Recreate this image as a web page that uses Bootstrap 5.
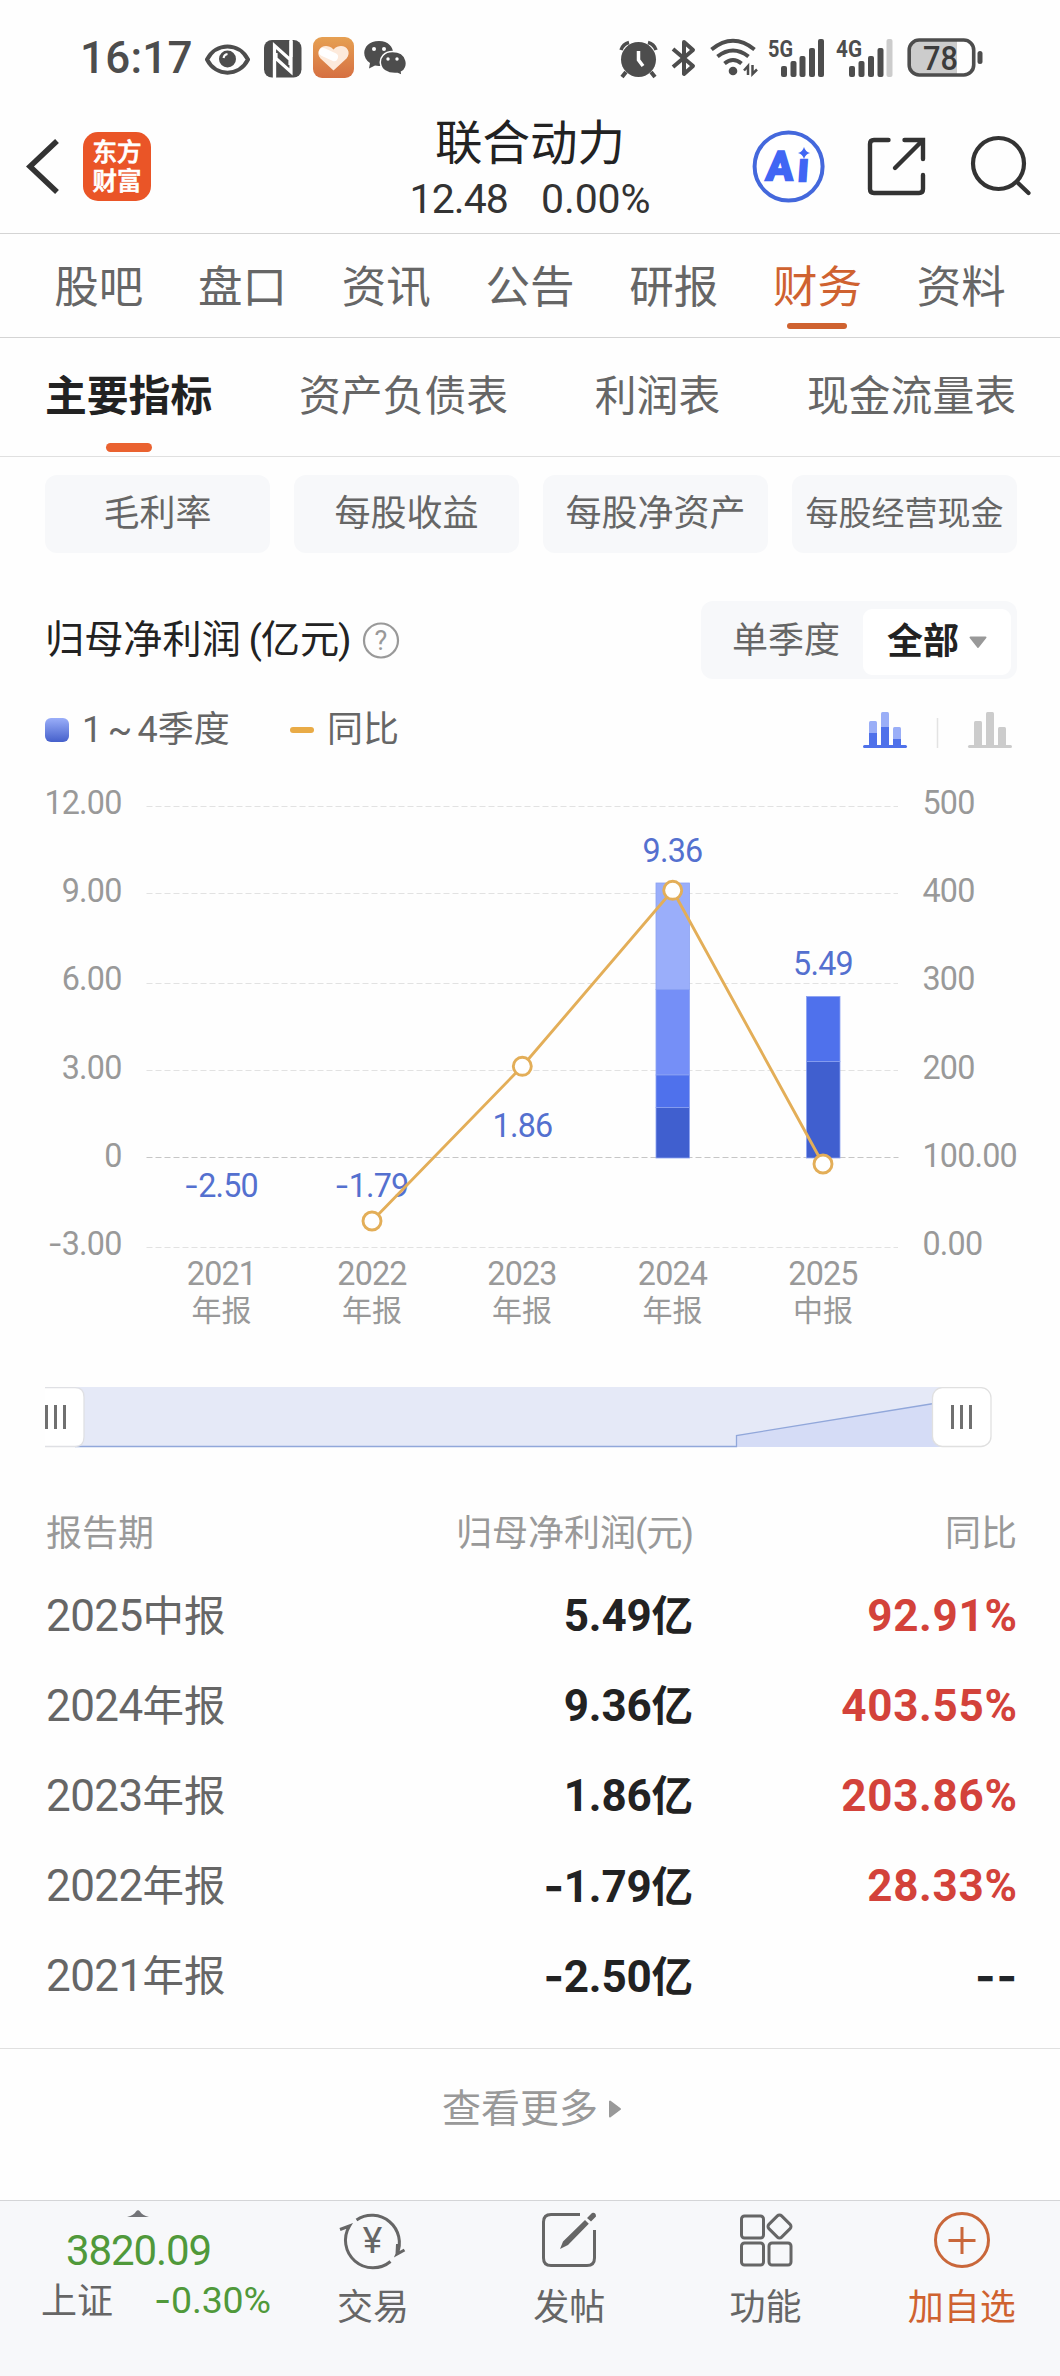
<!DOCTYPE html>
<html lang="zh-CN">
<head>
<meta charset="utf-8">
<meta name="viewport" content="width=device-width, initial-scale=1">
<title>联合动力 - 财务</title>
<link href="https://cdn.jsdelivr.net/npm/bootstrap@5.3.0/dist/css/bootstrap.min.css" rel="stylesheet">
<style>
  :root { --ink:#222; --mid:#666; --soft:#999; --brand:#cf6230; --rule:#d4d4d4; --panel:#f7f8fa; --up:#d3423a; --down:#50993a; --blue:#5470cf; }
  body { font-family: Roboto, "Noto Sans CJK SC", sans-serif; color: var(--ink); background:#fefefe; width:1060px; height:2376px; overflow:hidden; }
  svg { display:block; flex:none; }
  svg text { font-family: Roboto, "Noto Sans CJK SC", sans-serif; }
  .sgn { font-family: Inter, sans-serif; }
  .statusbar { height:115px; padding:36px 77px 35px 80px; color:#4d4d4d; }
  .clock { font-size:44px; font-weight:500; line-height:44px; width:125px; letter-spacing:.2px; }
  .eye { margin-left:0; } .nfc { margin-left:14px; } .heart { margin-left:11px; } .chat { margin-left:10px; }
  .bt, .wifi { margin-left:13px; } .sig1 { margin-left:9px; } .sig2 { margin-left:11px; } .batt { margin-left:14px; }
  .titlebar { height:118px; padding:0 28px 0 26px; }
  .stock-name { font-size:47.5px; line-height:58px; }
  .stock-quote { font-size:41px; line-height:48px; letter-spacing:-.9px; color:#333; gap:33px; padding-top:2px; }
  .stock-quote .rate { letter-spacing:-.1px; }
  .applogo { margin-left:23px; } .share { margin-left:41px; } .find { margin-left:43px; }
  .tabs-main { height:105px; padding:0 27px; border-top:1px solid var(--rule); border-bottom:1px solid var(--rule); }
  .tabs-main a { color:var(--mid); font-size:44.5px; line-height:60px; padding:24px 0 0; text-decoration:none; text-align:center; position:relative; }
  .tabs-main a.active { color:var(--brand); }
  .tabs-main a.active::after { content:""; position:absolute; left:50%; margin-left:-30px; bottom:8px; width:60px; height:6px; border-radius:3px; background:var(--brand); }
  .tabs-sub { height:119px; padding:0 44px 0 45px; border-bottom:1px solid #e0e0e0; }
  .tabs-sub a { color:var(--mid); font-size:41.8px; line-height:60px; padding-top:29px; text-decoration:none; position:relative; }
  .tabs-sub a.active { color:var(--ink); font-weight:700; }
  .tabs-sub a.active::after { content:""; position:absolute; left:50%; margin-left:-23px; bottom:4px; width:46px; height:9px; border-radius:4.5px; background:#ea6230; }
  .chips { padding:18px 43px 0 45px; gap:24px; }
  .chip { flex:1 1 0; height:78px; border-radius:12px; background:var(--panel); color:var(--mid); font-size:36px; line-height:78px; text-align:center; white-space:nowrap; }
  .chip.tight { font-size:33px; line-height:77px; }
  .section-head { height:78px; margin-top:48px; padding:0 43px 0 45px; }
  .section-title { font-size:39.2px; line-height:78px; word-spacing:-1px; white-space:nowrap; }
  .section-title i { font-style:normal; margin:0 -1.2px; }
  .help { margin-left:12px; }
  .segment { width:316px; height:78px; border-radius:12px; background:var(--panel); padding:8px 6px 4px 0; font-size:36px; }
  .segment .pick { width:148px; height:66px; border-radius:9px; background:#fff; font-weight:700; line-height:64px; padding-left:1px; }
  .segment .pick svg { margin-left:9px; }
  .segment .idle { width:162px; color:var(--mid); line-height:64px; padding-left:31px; }
  .legend { height:72px; padding:0 48px 0 45px; color:var(--mid); font-size:36px; margin-top:15px; margin-bottom:1px; line-height:72px; }
  .key-box { width:24px; height:24px; border-radius:6px; background:linear-gradient(#9aaef9,#4560cb); margin-right:13px; }
  .key-text { width:208px; word-spacing:-3.5px; white-space:nowrap; }
  .key-dash { width:24px; height:6px; border-radius:3px; background:#e9ab46; margin-right:13px; }
  .data-table { padding:0 43px 0 45px; margin-top:50px; }
  .data-table .line { height:90px; line-height:90px; font-size:41.5px; color:var(--mid); }
  .data-table .line.head { height:72px; line-height:72px; font-size:36px; color:var(--soft); margin-bottom:1px; }
  .head i { font-style:normal; margin:0 -1px; }
  .c1 { width:324px; padding-left:1px; } .c2 { width:324px; text-align:right; } .c3 { flex:1; text-align:right; }
  .num { font-size:44px; letter-spacing:-.6px; }
  .line .c2 .num { font-weight:700; letter-spacing:-.2px; }
  .line .c3 .num { font-weight:700; letter-spacing:.7px; margin-right:-.7px; }
  .line:not(.head) .c2 { color:var(--ink); font-weight:700; }
  .line:not(.head) .c3 { color:var(--up); }
  .more { height:152px; margin-top:27px; border-top:1px solid #e0e0e0; color:var(--soft); font-size:39px; line-height:60px; padding:30px 0 0 4px; }
  .more svg { margin:20px 0 0 10px; }
  .bottombar { height:176px; border-top:1px solid #d4d5d7; background:var(--panel); color:var(--mid); font-size:36px; }
  .index { width:275px; color:var(--down); padding-top:9px; }
  .index .val { font-size:42px; line-height:44px; letter-spacing:-1.1px; margin-top:12px; padding-left:2px; }
  .index .sub { gap:41px; margin-top:4px; padding-left:41px; width:275px; }
  .index .name { color:var(--mid); line-height:51px; }
  .index .chg { font-size:37.5px; line-height:46px; letter-spacing:-.2px; }
  .action { width:196.3px; padding-top:8px; line-height:48px; }
  .action span { margin-top:13px; }
  .action.add { color:var(--brand); }
</style>
</head>
<body>
<!-- system status bar -->
<div class="statusbar d-flex align-items-start">
  <div class="clock">16:17</div>
  <svg class="eye" width="45" height="44" viewBox="205 36 45 44"><path d="M207 59.5C216 42 239 42 248 59.5C239 77 216 77 207 59.5Z" fill="none" stroke="#4d4d4d" stroke-width="4"/><circle cx="227.500" cy="59" r="8.500" fill="#4d4d4d"/><path d="M223.500 58q.5-3.500 4-4" stroke="#fff" stroke-width="2" fill="none"/></svg>
  <svg class="nfc" width="38" height="44" viewBox="264 36 38 44"><rect x="264" y="40" width="37.500" height="37.500" rx="8" fill="#4d4d4d"/><path d="M274.500 77V45.500L290 59.500V65M291 41v31L276 58.500V53" fill="none" stroke="#fff" stroke-width="3.200"/><path d="M274.500 60v18M291 40v17" stroke="#fff" stroke-width="3.200"/></svg>
  <svg class="heart" width="41" height="44" viewBox="313 36 41 44"><defs><linearGradient id="hb" x2="0" y2="1"><stop stop-color="#e6a052"/><stop offset="1" stop-color="#d67042"/></linearGradient></defs><rect x="313" y="37" width="41" height="41" rx="9" fill="url(#hb)"/><path d="M333.500 70.500L320.500 58.500C313.500 50 325 41 333.500 49.500C342 41 353.500 50 346.500 58.500Z" fill="#fdeadb"/><path d="M323 52l11 5" stroke="#fff" stroke-width="8" stroke-linecap="round"/></svg>
  <svg class="chat" width="42" height="44" viewBox="364 36 42 44" fill="#4d4d4d"><path d="M379 41c19 0 19 25 0 25l-4-.5-6 3 1-5.500C360 57 363 41 379 41Z"/><path d="M392.500 51.500c16 0 17 17 9 20.500l.5 3.500-4.500-2c-22 2-22-22-5-22Z" stroke="#fefefe" stroke-width="1.500"/><g fill="#fefefe"><circle cx="374" cy="49" r="2"/><circle cx="384" cy="49" r="2"/><circle cx="388" cy="59" r="1.700"/><circle cx="397" cy="59" r="1.700"/></g></svg>
  <svg class="ms-auto" width="39" height="44" viewBox="619 36 39 44"><circle cx="638.500" cy="59.500" r="17.500" fill="#4d4d4d"/><path d="M626 72l-4 5M651 72l4 5" stroke="#4d4d4d" stroke-width="4"/><path d="M621 50q2-6 8-7.500M656 50q-2-6-8-7.500" stroke="#4d4d4d" stroke-width="3.500" fill="none"/><path d="M638.500 51v9l4.500 6" fill="none" stroke="#fff" stroke-width="3.500"/></svg>
  <svg class="bt" width="26" height="44" viewBox="671 36 26 44"><path d="M673 49l20 17-9 8V42l9 8-20 17" fill="none" stroke="#4d4d4d" stroke-width="4" stroke-linejoin="round"/></svg>
  <svg class="wifi" width="49" height="44" viewBox="710 36 49 44" fill="none" stroke="#4d4d4d" stroke-width="4"><path d="M711.500 49.500q21.500-17.500 43 0M717.500 56.500q15.500-12 31 0M724.500 63.500q8.500-7 17 0"/><circle cx="733" cy="71" r="4.300" fill="#4d4d4d" stroke="none"/><path d="M748 75V66l-4 4.500M752.500 65v9l4.500-4.500" stroke-width="2.500"/></svg>
  <svg class="sig1" width="57" height="44" viewBox="768 36 57 44" fill="#4d4d4d"><text x="768" y="57" font-size="24" font-weight="700" textLength="25" lengthAdjust="spacingAndGlyphs">5G</text><rect x="781" y="66" width="6" height="11" rx="2"/><rect x="790.500" y="61" width="6" height="16" rx="2"/><rect x="799.500" y="56" width="6" height="21" rx="2"/><rect x="809" y="48" width="6" height="29" rx="2"/><rect x="818" y="39" width="6" height="38" rx="2"/></svg>
  <svg class="sig2" width="57" height="44" viewBox="836 36 57 44" fill="#4d4d4d"><text x="836" y="57" font-size="24" font-weight="700" textLength="26" lengthAdjust="spacingAndGlyphs">4G</text><rect x="849" y="66" width="6" height="11" rx="2"/><rect x="858.500" y="61" width="6" height="16" rx="2"/><rect x="868" y="56" width="6" height="21" rx="2"/><rect x="877.500" y="48" width="6" height="29" rx="2"/><rect x="886.500" y="39" width="6" height="38" rx="2" fill="#ccc"/></svg>
  <svg class="batt" width="76" height="44" viewBox="907 36 76 44"><path d="M957 41V74H921Q911 74 911 64V51Q911 41 921 41Z" fill="#ccc"/><rect x="909.200" y="40" width="64.500" height="35" rx="10" fill="none" stroke="#4d4d4d" stroke-width="3.600"/><rect x="977.500" y="51" width="5" height="13" rx="2.500" fill="#4d4d4d"/><text x="940.500" y="69.500" font-size="33" font-weight="500" text-anchor="middle" textLength="35" lengthAdjust="spacingAndGlyphs" fill="#3c3c3c">78</text></svg>
</div>

<!-- stock title bar -->
<header class="titlebar d-flex align-items-start position-relative">
  <svg width="34" height="90" viewBox="26 115 34 90"><path d="M57 141L30 166.500L57 192" fill="none" stroke="#333" stroke-width="5.500"/></svg>
  <svg class="applogo" width="69" height="90" viewBox="83 115 69 90"><rect x="83" y="132" width="68" height="69" rx="15" fill="#ea5527"/><g fill="#fff" font-size="24.500" font-weight="500" stroke="#fff" stroke-width=".7" text-anchor="middle"><text x="117" y="161">东方</text><text x="117" y="190">财富</text></g></svg>
  <div class="position-absolute start-50 translate-middle-x text-center">
    <div class="stock-name">联合动力</div>
    <div class="stock-quote d-flex justify-content-center"><span>12.48</span><span class="rate">0.00%</span></div>
  </div>
  <svg class="ms-auto" width="74" height="90" viewBox="752 115 74 90"><circle cx="788.600" cy="166.500" r="34" fill="#fff" stroke="#4468dc" stroke-width="4"/><g fill="#4066f4" stroke="#4066f4" stroke-width="2.400" font-size="40" font-weight="700" transform="translate(0 180) skewX(-4)"><text x="765.500" y="0">A</text><text x="797" y="1">ı</text></g><path d="M804 147q1.500 5 6 6-4.500 1-6 6-1.500-5-6-6 4.500-1 6-6Z" fill="#4066f4"/></svg>
  <svg class="share" width="60" height="90" viewBox="867 115 60 90" fill="none" stroke="#333" stroke-width="4.400" stroke-linecap="round"><path d="M888.500 140H874Q870 140 870 144V189Q870 193 874 193H919Q923 193 923 189V175M904.500 140H923V159M922 141L895 168"/></svg>
  <svg class="find" width="62" height="90" viewBox="970 115 62 90" fill="none" stroke="#333" stroke-width="4.200" stroke-linecap="round"><circle cx="998.500" cy="163.500" r="25.500"/><path d="M1017 182l11.500 11"/></svg>
</header>

<nav class="tabs-main d-flex">
  <a class="flex-fill" href="#">股吧</a><a class="flex-fill" href="#">盘口</a><a class="flex-fill" href="#">资讯</a><a class="flex-fill" href="#">公告</a><a class="flex-fill" href="#">研报</a><a class="flex-fill active" href="#">财务</a><a class="flex-fill" href="#">资料</a>
</nav>
<nav class="tabs-sub d-flex justify-content-between">
  <a class="active" href="#">主要指标</a><a href="#">资产负债表</a><a href="#">利润表</a><a href="#">现金流量表</a>
</nav>

<div class="chips d-flex">
  <div class="chip">毛利率</div><div class="chip">每股收益</div><div class="chip">每股净资产</div><div class="chip tight">每股经营现金</div>
</div>

<div class="section-head d-flex align-items-center">
  <div class="section-title">归母净利润 <i>(</i>亿元<i>)</i></div>
  <svg class="help" width="38" height="38" viewBox="0 0 38 38"><circle cx="19" cy="19.500" r="17" fill="none" stroke="#999" stroke-width="2.200"/><text x="19" y="29" font-size="27" text-anchor="middle" fill="#999">?</text></svg>
  <div class="segment d-flex ms-auto">
    <div class="idle">单季度</div>
    <div class="pick d-flex justify-content-center align-items-center">全部<svg width="20" height="14" viewBox="0 0 20 14"><path d="M2.500 2.500H17.500L10 12Z" fill="#999" stroke="#999" stroke-width="2" stroke-linejoin="round"/></svg></div>
  </div>
</div>

<div class="legend d-flex align-items-center">
  <span class="key-box"></span><span class="key-text">1 ~ 4季度</span><span class="key-dash"></span><span>同比</span>
  <svg class="ms-auto" width="149" height="38" viewBox="863 711 149 38">
    <g fill="#9aaef7"><rect x="869" y="721" width="8" height="24" rx="1.500"/><rect x="881" y="712" width="8" height="30" rx="1.500"/><rect x="893" y="727" width="8" height="18" rx="1.500"/></g>
    <g fill="#4f71ea"><path d="M869 733h8v14h-8zM881 727h8v20h-8zM893 739h8v8h-8z"/><rect x="863" y="745" width="44" height="3" rx="1.500"/></g>
    <path d="M937.500 718v30" stroke="#e3e3e3" stroke-width="1.500"/>
    <g fill="#ccc"><rect x="974" y="721" width="8" height="25" rx="1.500"/><rect x="986" y="712" width="8" height="34" rx="1.500"/><rect x="998" y="727" width="8" height="19" rx="1.500"/><rect x="968" y="745" width="44" height="3" rx="1.500"/></g>
  </svg>
</div>

<!-- profit chart and range slider -->
<svg width="1060" height="681" viewBox="0 767 1060 681">
  <g stroke="#e2e2e2" stroke-width="1.200" stroke-dasharray="6 3"><path d="M146.500 806.500H898M146.500 893.500H898M146.500 983.500H898M146.500 1070.500H898M146.500 1247.500H898"/><path d="M146.500 1157.500H898.500" stroke="#c6c6c6"/></g>
  <g fill="#999" font-size="32.300" letter-spacing="-.8">
    <g text-anchor="end"><text x="121.500" y="814">12.00</text><text x="121.500" y="902">9.00</text><text x="121.500" y="990">6.00</text><text x="121.500" y="1078.500">3.00</text><text x="121.500" y="1166.500">0</text><text x="121.500" y="1255"><tspan class="sgn">-</tspan>3.00</text></g>
    <text x="922.500" y="814">500</text><text x="922.500" y="902">400</text><text x="922.500" y="990">300</text><text x="922.500" y="1078.500">200</text><text x="922.500" y="1166.500">100.00</text><text x="922.500" y="1255">0.00</text>
    <g text-anchor="middle"><text x="221.500" y="1285">2021</text><text x="372" y="1285">2022</text><text x="522" y="1285">2023</text><text x="672.500" y="1285">2024</text><text x="823" y="1285">2025</text></g>
  </g>
  <g fill="#999" font-size="30" text-anchor="middle"><text x="221.500" y="1321">年报</text><text x="372" y="1321">年报</text><text x="522" y="1321">年报</text><text x="672.500" y="1321">年报</text><text x="823" y="1321">中报</text></g>
  <g stroke="#8ca2f2" stroke-width=".8"><rect x="656" y="883" width="33.500" height="106.500" fill="#9aaefa"/><rect x="656" y="989.500" width="33.500" height="85.500" fill="#758ff7"/><rect x="656" y="1075" width="33.500" height="32.500" fill="#4f71ec"/><rect x="656" y="1107.500" width="33.500" height="50.500" fill="#405fcf"/><rect x="806.500" y="996.500" width="33.500" height="65" fill="#4f71ec"/><rect x="806.500" y="1061.500" width="33.500" height="96.500" fill="#405fcf"/></g>
  <g fill="#5470cf" font-size="32.300" letter-spacing="-.8" text-anchor="middle"><text x="221" y="1196.500"><tspan class="sgn">-</tspan>2.50</text><text x="371.500" y="1196.500"><tspan class="sgn">-</tspan>1.79</text><text x="522.500" y="1137">1.86</text><text x="672.500" y="862">9.36</text><text x="823" y="975">5.49</text></g>
  <g stroke="#e3ae58" stroke-width="2.900" fill="none"><path d="M372 1221L522.300 1066.300L672.700 890.300L823 1164"/><g fill="#fff"><circle cx="372" cy="1221" r="9"/><circle cx="522.300" cy="1066.300" r="9"/><circle cx="672.700" cy="890.300" r="9"/><circle cx="823" cy="1164" r="9"/></g></g>
  <rect x="45" y="1387" width="925" height="60" fill="#e5e9f7"/>
  <path d="M736.500 1447V1435.500L970 1397.500V1447Z" fill="#d5dcf6"/>
  <path d="M75 1446.500H736.500V1435.500L940 1402.500" fill="none" stroke="#91a7da" stroke-width="1.300"/>
  <path d="M45 1387.700H75Q84 1387.700 84 1397V1437Q84 1446.500 75 1446.500H45" fill="#fff" stroke="#dfe0e4" stroke-width="1.300"/>
  <rect x="932.500" y="1387.700" width="58.500" height="58.800" rx="10" fill="#fff" stroke="#e0e0e0" stroke-width="1.300"/>
  <path d="M46.500 1405v24M55.500 1405v24M64.500 1405v24M952.500 1405v24M961.500 1405v24M970.500 1405v24" stroke="#707070" stroke-width="3"/>
</svg>

<div class="data-table">
  <div class="line head d-flex"><div class="c1">报告期</div><div class="c2">归母净利润<i>(</i>元<i>)</i></div><div class="c3">同比</div></div>
  <div class="line d-flex"><div class="c1"><span class="num">2025</span>中报</div><div class="c2"><span class="num">5.49</span>亿</div><div class="c3"><span class="num">92.91%</span></div></div>
  <div class="line d-flex"><div class="c1"><span class="num">2024</span>年报</div><div class="c2"><span class="num">9.36</span>亿</div><div class="c3"><span class="num">403.55%</span></div></div>
  <div class="line d-flex"><div class="c1"><span class="num">2023</span>年报</div><div class="c2"><span class="num">1.86</span>亿</div><div class="c3"><span class="num">203.86%</span></div></div>
  <div class="line d-flex"><div class="c1"><span class="num">2022</span>年报</div><div class="c2"><span class="num"><span class="sgn">-</span>1.79</span>亿</div><div class="c3"><span class="num">28.33%</span></div></div>
  <div class="line d-flex"><div class="c1"><span class="num">2021</span>年报</div><div class="c2"><span class="num"><span class="sgn">-</span>2.50</span>亿</div><div class="c3 text-body"><span class="num sgn">--</span></div></div>
</div>

<div class="more d-flex justify-content-center align-items-start">查看更多<svg width="14" height="20" viewBox="0 0 14 20"><path d="M2 2.500V17.500L12 10Z" fill="#999" stroke="#999" stroke-width="2" stroke-linejoin="round"/></svg></div>

<footer class="bottombar d-flex">
  <div class="index d-flex flex-column align-items-center">
    <svg width="22" height="7" viewBox="0 0 22 7"><path d="M0 7Q7 5 9 1.500Q11 -1 13 1.500Q15 5 22 7Z" fill="#737478"/></svg>
    <div class="val">3820.09</div>
    <div class="sub d-flex"><span class="name text-nowrap">上证</span><span class="chg text-nowrap"><span class="sgn">-</span>0.30%</span></div>
  </div>
  <div class="action d-flex flex-column align-items-center">
    <svg width="70" height="62" viewBox="339 2209 70 62" fill="none" stroke="#666" stroke-width="3"><path d="M357.500 2220A27.500 27.500 0 0 1 398 2254L405.500 2250M398 2254L398.500 2244M391.500 2261.500A27.500 27.500 0 0 1 350.500 2226L341 2229.500"/><text x="373.500" y="2253" font-size="37" text-anchor="middle" fill="#666" stroke="none">¥</text></svg>
    <span>交易</span>
  </div>
  <div class="action d-flex flex-column align-items-center">
    <svg width="56" height="62" viewBox="542 2209 56 62" fill="none" stroke="#666" stroke-width="3"><path d="M581 2214.500H552Q544.500 2214.500 544.500 2222V2258Q544.500 2265.500 552 2265.500H588Q595.500 2265.500 595.500 2258V2230"/><path d="M586 2220l3.800 3.800L569 2245L561 2249L564 2241.500ZM588 2218l5-5Q597 2212 597 2216.500L592 2221.500Z" fill="#666" stroke="none"/></svg>
    <span>发帖</span>
  </div>
  <div class="action d-flex flex-column align-items-center">
    <svg width="54" height="62" viewBox="739 2209 54 62" fill="none" stroke="#666" stroke-width="3"><rect x="741.500" y="2216" width="22" height="22" rx="3"/><rect x="741.500" y="2243" width="22" height="22" rx="3"/><rect x="769" y="2243" width="22" height="22" rx="3"/><rect x="770.500" y="2217.500" width="18" height="18" rx="3" transform="rotate(45 779.500 2226.500)"/></svg>
    <span>功能</span>
  </div>
  <div class="action add d-flex flex-column align-items-center">
    <svg width="60" height="62" viewBox="932 2209 60 62" fill="none" stroke="#c9673a" stroke-width="3"><circle cx="962" cy="2240" r="26.500"/><path d="M962 2227v27M948.500 2240.500h27"/></svg>
    <span>加自选</span>
  </div>
</footer>
<script src="https://cdn.jsdelivr.net/npm/bootstrap@5.3.0/dist/js/bootstrap.bundle.min.js"></script>
</body>
</html>
